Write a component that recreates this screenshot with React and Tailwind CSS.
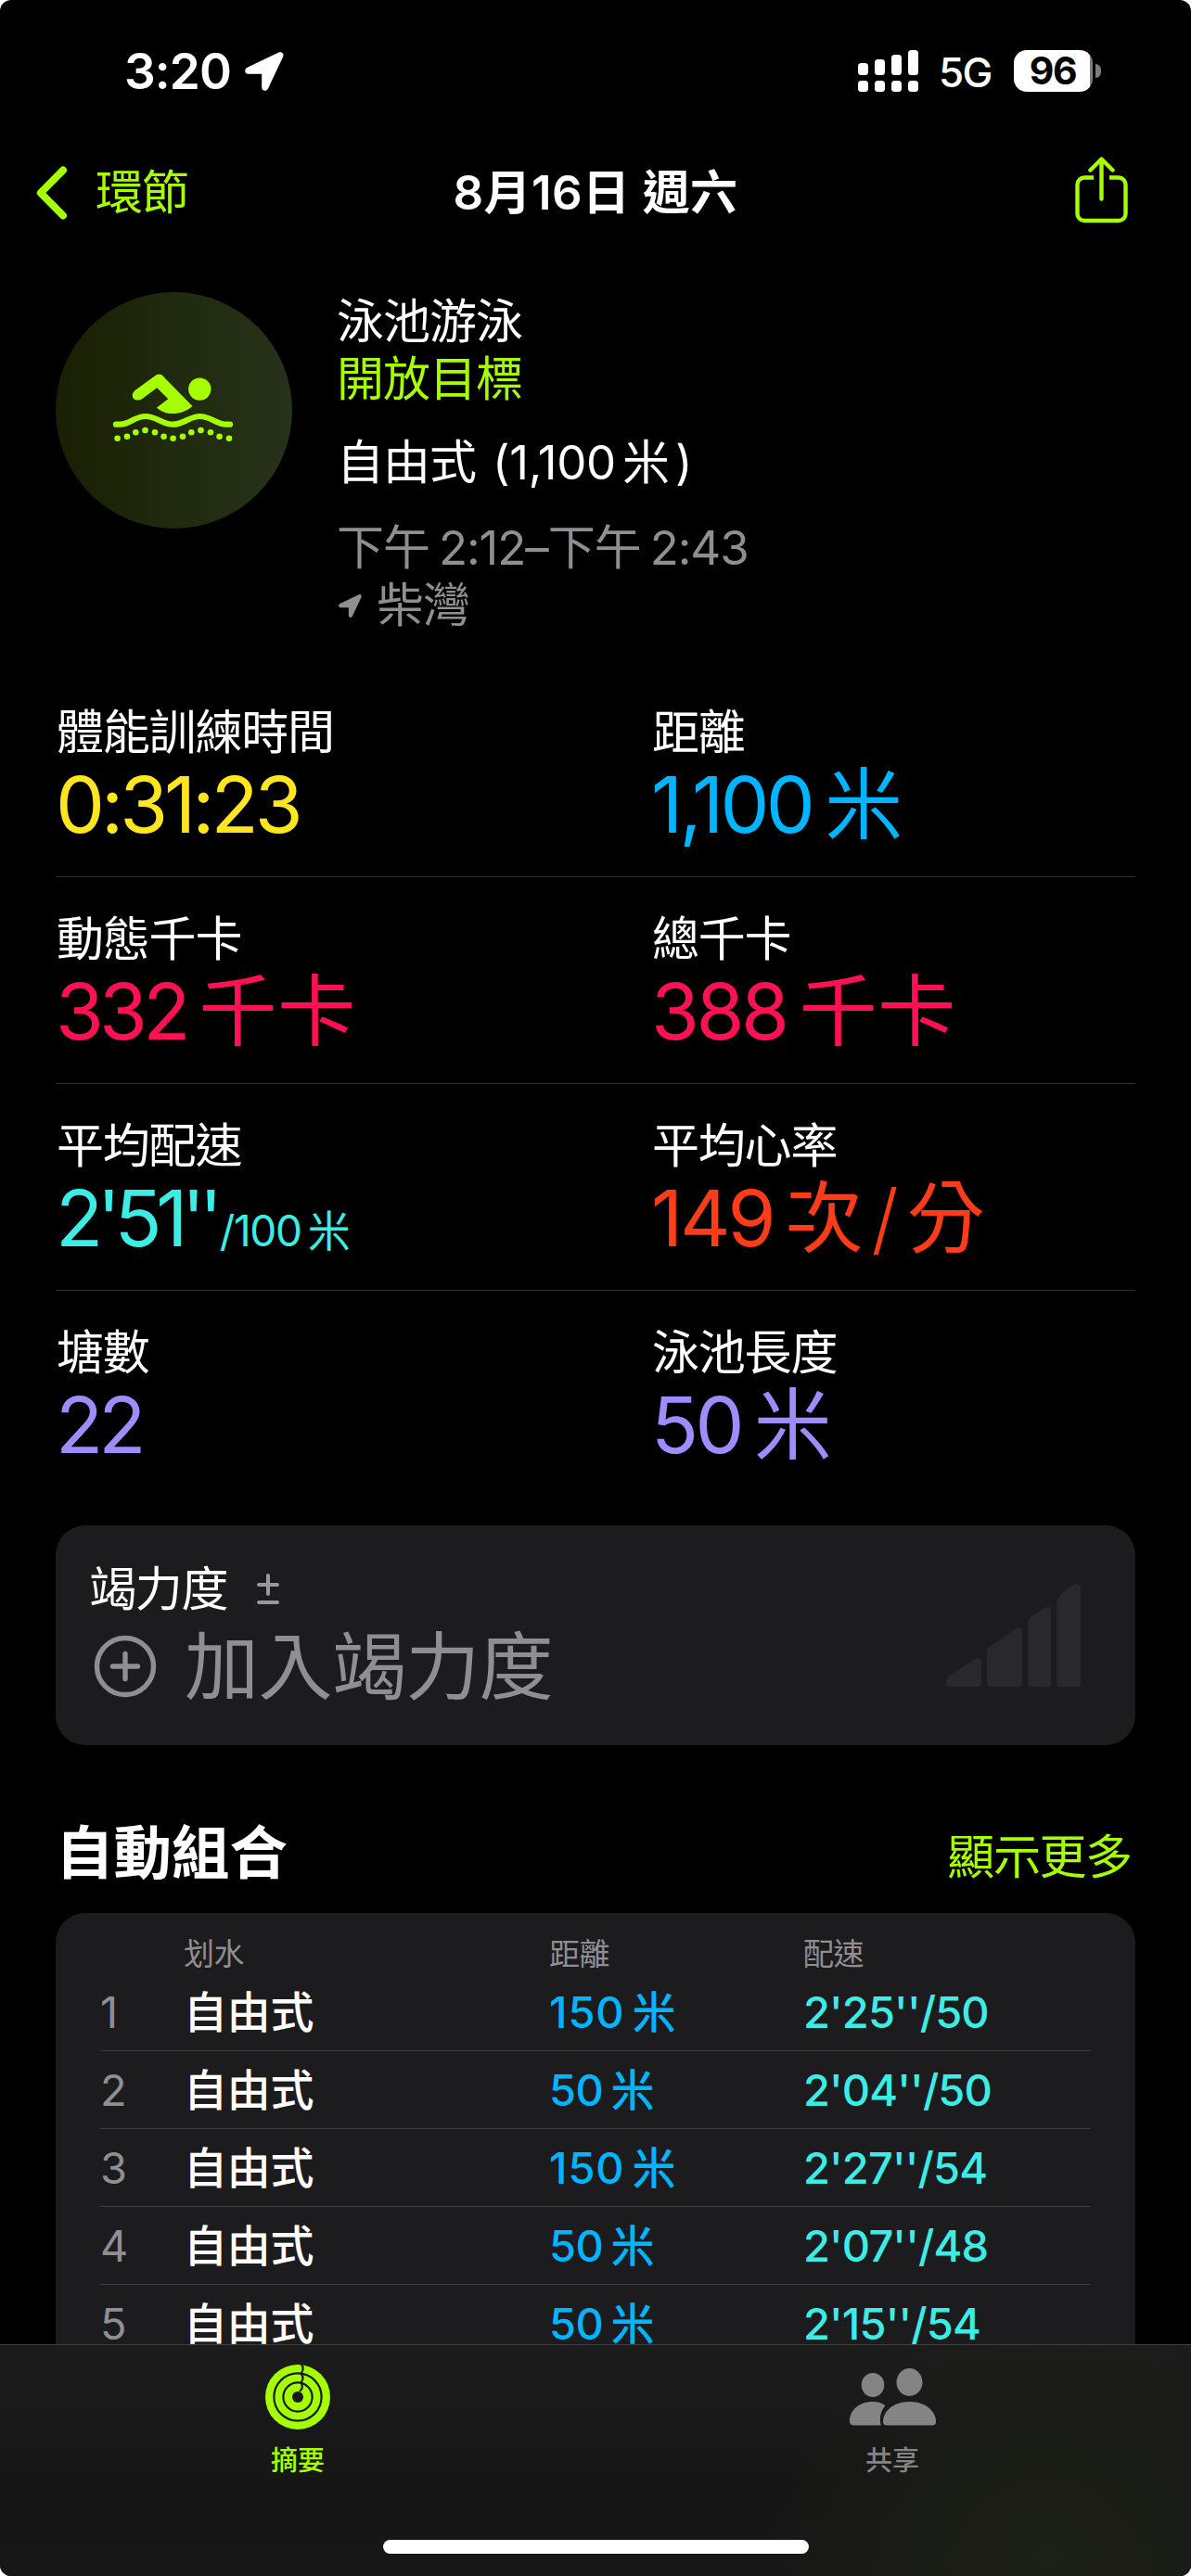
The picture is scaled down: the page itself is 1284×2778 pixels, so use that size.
import React from "react";

const metrics = [
  [
    { label: "體能訓練時間", color: "text-[#ffe620]", value: "0:31:23", track: "tracking-[-4px]" },
    { label: "距離", color: "text-[#00b5ff]", value: "1,100", unit: "米", track: "tracking-[-3.6px]" },
  ],
  [
    { label: "動態千卡", color: "text-[#ff1153]", value: "332", unit: "千卡", track: "tracking-[-4.8px]" },
    { label: "總千卡", color: "text-[#ff1153]", value: "388", unit: "千卡", track: "tracking-[-3.4px]" },
  ],
  [
    { label: "平均配速", color: "text-[#3eece6]", value: "2'51''", small: true, track: "tracking-[-6.4px]" },
    { label: "平均心率", color: "text-[#ff3c1a]", value: "149", perMinute: true, track: "tracking-[-3px]" },
  ],
  [
    { label: "塘數", color: "text-[#a18cff]", value: "22", track: "tracking-[-5px]" },
    { label: "泳池長度", color: "text-[#a18cff]", value: "50", unit: "米", track: "tracking-[-3.6px]" },
  ],
];

const sets = [
  ["1", "150", "2'25''/50"],
  ["2", "50", "2'04''/50"],
  ["3", "150", "2'27''/54"],
  ["4", "50", "2'07''/48"],
  ["5", "50", "2'15''/54"],
];

function LocationArrow({ className }) {
  return (
    <svg viewBox="0 0 42 42" className={className} fill="currentColor">
      <path d="M36.5 0.6 2.6 16.8C-1 18.6-.6 23.8 3.6 23.8H18.2V38c0 4.400 5 5.200 6.800 1.400L41 5.400C42.600 2 40-1 36.500.600Z" />
    </svg>
  );
}

function StatusBar() {
  return (
    <div className="flex h-[154px] items-center pl-[134px] pr-[97px]">
      <span className="text-[53px] font-semibold leading-[60px] tracking-[-0.9px]">3:20</span>
      <LocationArrow className="ml-[15px] h-[42px] w-[42px]" />
      <svg viewBox="0 0 65 45" className="ml-auto h-[45px] w-[65px] -translate-y-[1px]" fill="#fff">
        <rect x="0" y="14" width="11" height="13" rx="3.500" />
        <rect x="18" y="10" width="11" height="17" rx="3.500" />
        <rect x="36" y="5" width="11" height="22" rx="3.500" />
        <rect x="54" y="0" width="11" height="27" rx="3.500" />
        <rect x="0" y="33" width="11" height="12" rx="3.500" />
        <rect x="18" y="33" width="11" height="12" rx="3.500" />
        <rect x="36" y="33" width="11" height="12" rx="3.500" />
        <rect x="54" y="33" width="11" height="12" rx="3.500" />
      </svg>
      <span className="ml-[22px] w-[58px] whitespace-nowrap text-[44px] font-medium leading-[50px] tracking-[-1.8px] translate-y-[1px]">5G</span>
      <div className="ml-[23px] flex items-center -translate-y-[1px]">
        <div className="flex h-[45px] w-[85px] items-center justify-center rounded-[14px] bg-linear-to-r from-white from-[82px] to-[#7d7d7d] to-[82px] pr-[1px] text-[41px] font-bold leading-[45px] tracking-[-1.5px] text-black">96</div>
        <div className="ml-[3px] h-[15px] w-[6px] rounded-r-full bg-[#7d7d7d]" />
      </div>
    </div>
  );
}

function NavBar() {
  return (
    <div className="flex h-[107px] items-center px-[39px] text-[51px] leading-[60px]">
      <div className="flex flex-1 items-center text-[#a6ff00]">
        <svg viewBox="0 0 34 58" className="h-[58px] w-[34px]" fill="none" stroke="currentColor" strokeWidth="8" strokeLinecap="round" strokeLinejoin="round">
          <path d="M29 4.500 4.800 29 29 53.500" />
        </svg>
        <span className="ml-[30px] tracking-[-1.3px]">環節</span>
      </div>
      <h1 className="whitespace-pre font-semibold tracking-[0.4px]">8月16日 週六</h1>
      <div className="flex flex-1 justify-end">
        <svg viewBox="0 0 57 72" className="mr-[29px] h-[72px] w-[57px] -translate-y-[3px]" fill="none" stroke="#a6ff00" strokeWidth="4.400" strokeLinecap="round" strokeLinejoin="round">
          <path d="M20 22.500H10a7.500 7.500 0 0 0-7.500 7.500v31.500A7.500 7.500 0 0 0 10 69h37a7.500 7.500 0 0 0 7.500-7.500V30a7.500 7.500 0 0 0-7.500-7.500H37" strokeLinecap="butt" />
          <path d="M28.500 45.500V3M16.500 14.500 28.500 2.500l12 12" />
        </svg>
      </div>
    </div>
  );
}

function SwimBadge() {
  const dots = [
    [16.600, 92.700], [27, 90.700], [36.300, 86.300], [46.500, 84], [57, 86.300], [66.600, 90.700],
    [76.600, 92.700], [87, 90.700], [96.300, 86.300], [106.500, 84], [117, 86.300], [126.600, 90.700], [137, 92.700],
  ];
  return (
    <div className="flex h-[255px] w-[255px] shrink-0 items-center justify-center rounded-full bg-linear-to-r from-[#191f04] via-[#202a0e] to-[#27321a]">
      <svg viewBox="0 0 150 120" className="h-[120px] w-[150px] -translate-x-[3px] -translate-y-[3px]" fill="#a6ff00">
        <circle cx="105.300" cy="39.600" r="12.200" />
        <path d="M37 50.700 57.500 36.200 60 39 71.300 50.200 59 59.400C67 67.500 84 69.500 97.500 58L65.300 25.300C63 23.200 60 23.200 57.500 25L36.300 40.500C29 46 34 53.500 41 51Z" />
        <path d="M39.700 45.600 61.500 29.500" stroke="#a6ff00" strokeWidth="11.400" strokeLinecap="round" fill="none" />
        <path d="M15 77.700h4.500C30 77.700 35 69 47 69s18 8.700 29.500 8.700S94 69 105.500 69s18 8.700 28.500 8.700h4" fill="none" stroke="#a6ff00" strokeWidth="6.200" strokeLinecap="round" />
        {dots.map(([x, y]) => (
          <circle key={x} cx={x} cy={y} r="3.300" />
        ))}
      </svg>
    </div>
  );
}

function Hero() {
  return (
    <section className="mt-[54px] flex gap-[48px] px-[60px] text-[51px] leading-[62px] tracking-[-1px]">
      <SwimBadge />
      <div className="flex flex-col whitespace-pre">
        <span className="pt-px">泳池游泳</span>
        <span className="text-[#a6ff00]">開放目標</span>
        <span className="mt-[28px] flex">
          自由式<span className="ml-[18px] tracking-[-0.3px]">(1,100</span>
          <span className="ml-[7px]">米</span>
          <span className="ml-[7px]">)</span>
        </span>
        <span className="mt-[30px] flex text-[#8e8e93]">
          下午<span className="ml-[10px] tracking-[-1.1px]">2:12–</span>下午<span className="ml-[10px] tracking-[-1.1px]">2:43</span>
        </span>
        <span className="flex items-center text-[#8e8e93]">
          <LocationArrow className="ml-[2px] mr-[16px] h-[25px] w-[25px]" />柴灣
        </span>
      </div>
    </section>
  );
}

function Metric({ m }) {
  return (
    <div className="flex flex-col">
      <span className="pl-px text-[51px] leading-[60px] tracking-[-1.200px]">{m.label}</span>
      <div className={`mt-[3px] flex whitespace-pre text-[84px] leading-[90px] ${m.color}`}>
        <span className={m.track}>{m.value}</span>
        {m.unit && <span className="ml-[14px] tracking-[0.6px]">{m.unit}</span>}
        {m.perMinute && (
          <span className="ml-[13px] flex">
            次<span className="w-[47px] text-center font-light">/</span>分
          </span>
        )}
        {m.small && (
          <span className="ml-[3px] flex translate-y-[13px] text-[46px] tracking-[-1.300px]">
            /100<span className="ml-[7px]">米</span>
          </span>
        )}
      </div>
    </div>
  );
}

function EffortCard() {
  return (
    <section className="mx-[60px] mt-[30px] flex h-[237px] items-center justify-between rounded-[32px] bg-[#1c1c1e] pl-[36px] pr-[59px]">
      <div className="flex flex-col">
        <div className="flex translate-y-px items-center text-[51px] leading-[60px] tracking-[-1.300px]">
          <span>竭力度</span>
          <svg viewBox="0 0 24 34" className="ml-[32px] h-[34px] w-[24px]" fill="none" stroke="#98989d" strokeWidth="4" strokeLinecap="round">
            <path d="M12 2v20M2 12h20M2 31h20" />
          </svg>
        </div>
        <div className="mt-[7px] flex items-center text-[80px] leading-[94px] tracking-[-0.600px] text-[#8e8e93]">
          <svg viewBox="0 0 68 68" className="ml-[5px] mr-[30px] h-[68px] w-[68px]" fill="none" stroke="currentColor" strokeWidth="5.400" strokeLinecap="round">
            <circle cx="34" cy="34" r="30.500" />
            <path d="M34 20.500v27M20.500 34h27" />
          </svg>
          加入竭力度
        </div>
      </div>
      <svg viewBox="0 0 145 111" className="h-[111px] w-[145px]" fill="#29292b">
        <path d="M3.500 99 30 81.500q8-4 8 2V107q0 4-4 4H4q-4 0-4-4 0-5 3.500-8Z" />
        <path d="M47.500 67.500 74 49q8-4 8 3v55q0 4-4 4H48q-4 0-4-4V73q0-3.500 3.500-5.500Z" />
        <path d="M91.500 36 106 26q7-4 7 4v77q0 4-4 4H92q-4 0-4-4V42q0-4 3.500-6Z" />
        <path d="M123 12.500Q133 2 140 0q5-.500 5 5v102q0 4-4 4h-17.500q-4 0-4-4V20q0-4.500 3.500-7.500Z" />
      </svg>
    </section>
  );
}

function SetsTable() {
  return (
    <section className="mx-[60px] h-[600px] rounded-[32px] bg-[#1c1c1e] px-[48px] pt-[24px]">
      <div className="grid h-[41px] grid-cols-[90px_394px_274px_1fr] text-[33px] leading-[40px] tracking-[-0.500px] text-[#8e8e93]">
        <span />
        <span>划水</span>
        <span>距離</span>
        <span>配速</span>
      </div>
      {sets.map(([n, dist, pace]) => (
        <div key={n} className="grid h-[84px] grid-cols-[90px_394px_274px_1fr] items-center whitespace-pre border-b border-[#3d3d40] text-[47px] font-medium leading-[60px]">
          <span className="font-normal text-[#8e8e93]">{n}</span>
          <span className="tracking-[-0.300px]">自由式</span>
          <span className="flex text-[#00b5ff]">
            <span className={dist.length > 2 ? "tracking-[0.900px]" : "tracking-[-0.500px]"}>{dist}</span>
            <span className="ml-[8px]">米</span>
          </span>
          <span className="tracking-[-0.900px] text-[#3eece6]">{pace}</span>
        </div>
      ))}
    </section>
  );
}

function TabBar() {
  return (
    <nav className="relative h-[250px] shrink-0 border-t border-[#3c3d3d] bg-[radial-gradient(ellipse_300px_260px_at_1130px_230px,#1d2016,transparent),linear-gradient(180deg,#1c1c1c,#161616_60%,#171717)]">
      <div className="grid grid-cols-2 text-[29px] font-medium leading-[36px]">
        <div className="flex flex-col items-center pt-[21px] text-[#a6ff00]">
          <svg viewBox="-35 -35 70 70" className="h-[70px] w-[70px]">
            <circle r="35" fill="currentColor" />
            <g fill="none" stroke="#1a1a1a" strokeWidth="2.200">
              <circle r="25.600" />
              <circle r="15.600" />
              <path d="M4 -35.500Q7.500-30.500 3.500-25.500M3.500-25.500Q7.500-20.500 3.500-15.500M3.500-15.500Q7-10.500 2-6" />
            </g>
            <circle r="6" fill="#1a1a1a" />
          </svg>
          <span className="mt-[16px]">摘要</span>
        </div>
        <div className="flex flex-col items-center pr-[2px] pt-[21px] text-[#848484]">
          <svg viewBox="916 2550 93 70" className="h-[70px] w-[93px]" fill="currentColor">
            <ellipse cx="941" cy="2572" rx="12.300" ry="13" />
            <ellipse cx="980.500" cy="2569" rx="14" ry="15" />
            <path d="M941 2590c5.500 0 10 1.500 13.500 4.200-4.500 5-6 11-5.500 17 0 1.500.200 2.800.900 4.300H921c-3.500 0-5-1.500-5-4.500 0-11 9-21 25-21Z" />
            <path d="M980.500 2590c18 0 28.500 11 28.500 21.500 0 3-1.500 4-4.500 4h-48c-3 0-4.500-1-4.500-4 0-10.500 10.500-21.500 28.500-21.500Z" />
          </svg>
          <span className="mt-[16px]">共享</span>
        </div>
      </div>
      <div className="mx-auto mt-[67px] h-[15px] w-[459px] rounded-full bg-white" />
    </nav>
  );
}

export default function App() {
  return (
    <div className="h-[2778px] w-[1284px] bg-white">
      <div className="flex h-full flex-col overflow-hidden rounded-[12px] bg-black font-['Inter','Noto_Sans_CJK_TC',sans-serif] text-white">
        <main className="min-h-0 flex-1 overflow-hidden">
          <StatusBar />
          <NavBar />
          <Hero />
          <section className="mt-[39px] px-[60px]">
            {metrics.map((row, i) => (
              <div key={i} className={`grid h-[223px] grid-cols-[642px_1fr] pt-[37px] ${i < 3 ? "border-b border-[#303032]" : ""}`}>
                {row.map((m) => (
                  <Metric key={m.label} m={m} />
                ))}
              </div>
            ))}
          </section>
          <EffortCard />
          <div className="mb-[25px] mt-[76px] flex h-[80px] items-center justify-between pl-[60px] pr-[64px]">
            <h2 className="text-[62.500px] font-bold leading-[80px]">自動組合</h2>
            <span className="translate-y-[5px] text-[51px] leading-[60px] tracking-[-1.300px] text-[#a6ff00]">顯示更多</span>
          </div>
          <SetsTable />
        </main>
        <TabBar />
      </div>
    </div>
  );
}
